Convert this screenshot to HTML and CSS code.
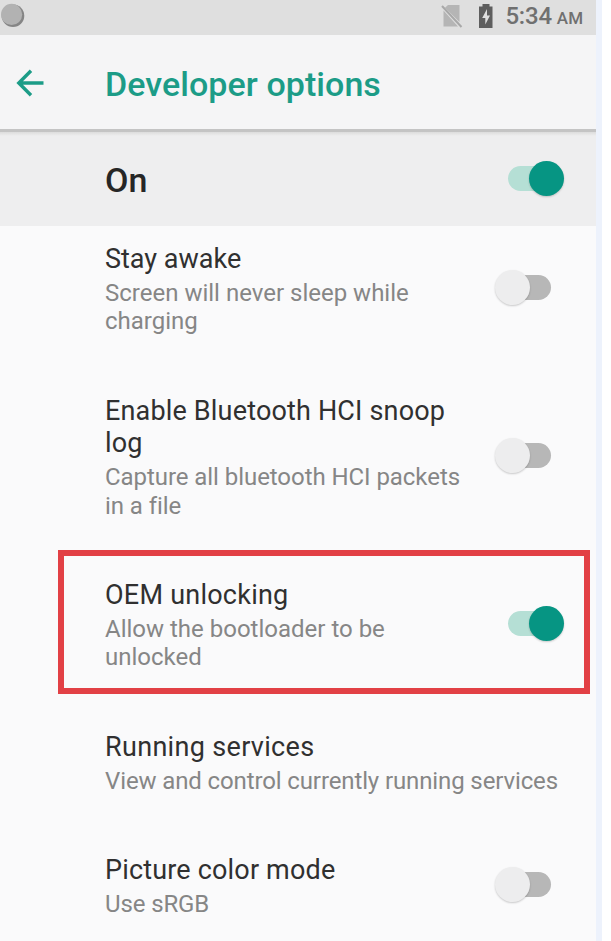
FILE: index.html
```html
<!DOCTYPE html>
<html lang="en">
<head>
<meta charset="utf-8">
<title>Developer options</title>
<link rel="stylesheet" href="styles.css">
</head>
<body>
<main class="phone">
  <div class="statusbar">
    <svg class="status-dot" width="28" height="28" viewBox="0 0 28 28"><circle cx="14" cy="14.8" r="11.3" fill="#858585"/><circle cx="12.6" cy="13.4" r="10.6" fill="#b2b2b2"/></svg>
    <div class="status-right">
      <svg class="no-sim" width="22" height="24" viewBox="0 0 22 24"><path d="M7 1H18.500V18L4 3.800Z M2.500 6.500L17 22.500H2.500Z" fill="#b5b5b5"/><path d="M1 2L20.500 23" stroke="#a8a8a8" stroke-width="2"/></svg>
      <svg class="battery" width="16" height="26" viewBox="0 0 16 26"><path d="M4.500 1H11.500V3.500H14.500V25H1V3.500H4.500Z" fill="#5e5e5e"/><path d="M9 6L4.200 15H7.300V21.500L12 12.500H9Z" fill="#dfdfdf"/></svg>
      <span class="clock">5:34</span><span class="ampm">AM</span>
    </div>
  </div>
  <header class="appbar">
    <svg class="back" width="28" height="28" viewBox="0 0 28 28"><path d="M27.500 14H3M15 1.800L2.800 14L15 26.200" fill="none" stroke="#1c9c87" stroke-width="3.400"/></svg>
    <h1 class="page-title">Developer options</h1>
  </header>
  <section class="master">
    <span class="master-label">On</span>
    <span class="switch on"><i class="track"></i><i class="thumb"></i></span>
  </section>
  <section class="list">
    <div class="row">
      <div class="text"><h2 class="name">Stay awake</h2><p class="desc">Screen will never sleep while<br>charging</p></div>
      <span class="switch"><i class="track"></i><i class="thumb"></i></span>
    </div>
    <div class="row">
      <div class="text"><h2 class="name wide">Enable Bluetooth HCI snoop<br>log</h2><p class="desc snug">Capture all bluetooth HCI packets<br>in a file</p></div>
      <span class="switch"><i class="track"></i><i class="thumb"></i></span>
    </div>
    <div class="row highlighted">
      <div class="text"><h2 class="name wider">OEM unlocking</h2><p class="desc">Allow the bootloader to be<br>unlocked</p></div>
      <span class="switch on"><i class="track"></i><i class="thumb"></i></span>
    </div>
    <div class="row">
      <div class="text"><h2 class="name widest">Running services</h2><p class="desc tight">View and control currently running services</p></div>
    </div>
    <div class="row">
      <div class="text"><h2 class="name wide">Picture color mode</h2><p class="desc tight">Use sRGB</p></div>
      <span class="switch"><i class="track"></i><i class="thumb"></i></span>
    </div>
  </section>
</main>
</body>
</html>
```
FILE: styles.css
```css
*, *::after { box-sizing: border-box; }
html, body { height: 100%; overflow: hidden; }
body { margin: 0; background: #fff; font-family: Roboto, "Liberation Sans", sans-serif; }
h1, h2, p { margin: 0; font-weight: 400; white-space: nowrap; }
.phone { width: 602px; height: 941px; overflow: hidden; background: #fafafb; border-right: 6px solid #edf2fc; }
.statusbar { height: 35px; background: #dfdfdf; display: flex; justify-content: space-between; align-items: center; padding-right: 13px; }
.status-dot { margin-top: -6px; margin-left: -1px; }
.status-right { display: flex; align-items: baseline; margin-top: -3px; color: #707070; }
.no-sim { margin-right: 15px; margin-top: 0; align-self: center; }
.battery { margin-right: 11px; margin-top: -1px; align-self: center; }
.clock { font-size: 24px; font-weight: 500; line-height: 32px; letter-spacing: -0.200px; }
.ampm { font-size: 17px; font-weight: 500; margin-left: 5px; }
.appbar { height: 97px; padding-left: 16px; display: flex; align-items: center; background: #f5f5f6; border-bottom: 3px solid #c4c4c4; }
.back { margin-top: 2px; }
.page-title { margin-left: 61px; padding-top: 4px; font-size: 34px; font-weight: 500; line-height: 40px; letter-spacing: 0.060px; color: #1c9c87; }
.master { height: 94px; padding: 0 32px 0 105px; display: flex; align-items: center; justify-content: space-between; background: linear-gradient(#dcdcdc, #eeeeef 4px); }
.master-label { padding-top: 2px; font-size: 34px; font-weight: 500; color: #262626; }
.master .switch { margin-bottom: 2px; }
.list { padding: 17px 32px 0 105px; display: flex; flex-direction: column; gap: 62px; }
.row { display: flex; align-items: center; justify-content: space-between; position: relative; }
.name { font-size: 27px; line-height: 32.700px; color: #303030; }
.name.wide { letter-spacing: 0.170px; }
.name.wider { letter-spacing: 0.240px; }
.name.widest { letter-spacing: 0.320px; }
.desc { margin: 3px 0 -3px; font-size: 24px; line-height: 28.500px; color: #868686; }
.desc.snug { letter-spacing: -0.060px; }
.desc.tight { letter-spacing: -0.120px; }
.highlighted::after { content: ""; position: absolute; left: -47px; right: -26px; top: -29px; height: 144px; border: 6px solid #e24045; }
.switch { position: relative; flex: none; width: 70px; height: 35px; }
.track { position: absolute; left: 14px; top: 5px; width: 43px; height: 25px; border-radius: 13px; background: #b7b7b7; }
.thumb { position: absolute; left: 1px; top: 0; width: 35px; height: 35px; border-radius: 50%; background: #ededee; box-shadow: 0 1px 2px #00000033; }
.on .track { background: #b5dfd5; }
.on .thumb { left: 35px; background: #069583; }
```
